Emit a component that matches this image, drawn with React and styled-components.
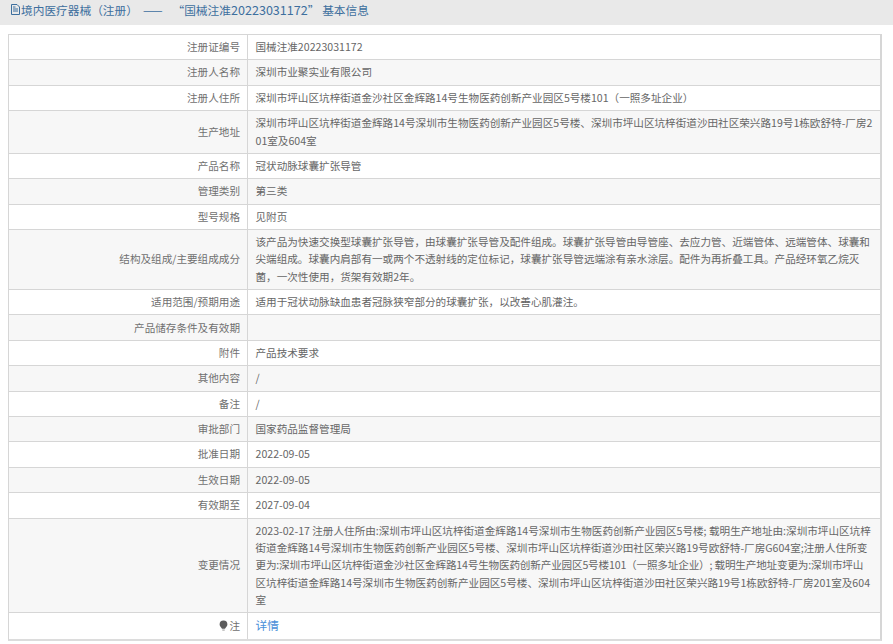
import React from 'react';
import styled, { createGlobalStyle } from 'styled-components';

const GlobalStyle = createGlobalStyle`
    html, body {
        margin: 0;
        padding: 0;
        background: #fff;
    }
    body {
        font-family: "Noto Sans CJK SC", "Liberation Sans", sans-serif;
        font-size: 10.6px;
        color: #666;
    }
`;

const Header = styled.div`
    display: flex;
    align-items: center;
    height: 18.5px;
    padding: 0 0 6px 10px;
    background: #e9e9e9;
    color: #3d6f9e;
    font-size: 11.7px;
    white-space: pre;
`;

const DocIcon = styled.svg`
    width: 11px;
    height: 13px;
    flex: none;
`;

const HeaderDash = styled.span`
    margin: 0 8px 0 5px;
    letter-spacing: 2px;
`;

const HeaderNumber = styled.span`
    font-size: 12.6px;
`;

const Table = styled.div`
    margin: 9.5px 11px 0 8px;
    border-top: 1px solid #d6d6d6;
    border-left: 1px solid #d6d6d6;
    border-right: 2px solid #d6d6d6;
    border-bottom: 2px solid #dcdcdc;
`;

const Row = styled.div`
    display: flex;
    background: ${props => (props.$shaded ? '#f7f7f7' : '#fff')};
    border-top: ${props => (props.$first ? 'none' : '1px solid #d6d6d6')};
`;

const Label = styled.div`
    display: flex;
    align-items: center;
    justify-content: flex-end;
    flex: none;
    width: 231px;
    padding: 3.1px 7px 4px 0;
    line-height: 17.3px;
    border-right: 1px solid #d6d6d6;
    color: #707070;
`;

const Value = styled.div`
    flex: 1;
    min-width: 0;
    padding: 3.1px 6px 4px 7.5px;
    line-height: 17.3px;
    word-break: break-all;
`;

const Line = styled.div`
    white-space: nowrap;
    letter-spacing: ${props => (props.$tight ? '-0.17px' : 'normal')};
`;

const DetailLink = styled.a`
    color: #4a90d9;
    font-size: 11.7px;
    text-decoration: none;
`;

const BulbIcon = styled.svg`
    width: 9px;
    height: 11px;
    margin-right: 1px;
`;

const rows = [
    ['注册证编号', '国械注准20223031172'],
    ['注册人名称', '深圳市业聚实业有限公司'],
    ['注册人住所', '深圳市坪山区坑梓街道金沙社区金辉路14号生物医药创新产业园区5号楼101（一照多址企业）'],
    ['生产地址', '深圳市坪山区坑梓街道金辉路14号深圳市生物医药创新产业园区5号楼、深圳市坪山区坑梓街道沙田社区荣兴路19号1栋欧舒特-厂房201室及604室'],
    ['产品名称', '冠状动脉球囊扩张导管'],
    ['管理类别', '第三类'],
    ['型号规格', '见附页'],
    ['结构及组成/主要组成成分', '该产品为快速交换型球囊扩张导管，由球囊扩张导管及配件组成。球囊扩张导管由导管座、去应力管、近端管体、远端管体、球囊和尖端组成。球囊内肩部有一或两个不透射线的定位标记，球囊扩张导管远端涂有亲水涂层。配件为再折叠工具。产品经环氧乙烷灭菌，一次性使用，货架有效期2年。'],
    ['适用范围/预期用途', '适用于冠状动脉缺血患者冠脉狭窄部分的球囊扩张，以改善心肌灌注。'],
    ['产品储存条件及有效期', ''],
    ['附件', '产品技术要求'],
    ['其他内容', '/'],
    ['备注', '/'],
    ['审批部门', '国家药品监督管理局'],
    ['批准日期', '2022-09-05'],
    ['生效日期', '2022-09-05'],
    ['有效期至', '2027-09-04'],
];

const changeLines = [
    '2023-02-17 注册人住所由:深圳市坪山区坑梓街道金辉路14号深圳市生物医药创新产业园区5号楼; 载明生产地址由:深圳市坪山区坑梓',
    '街道金辉路14号深圳市生物医药创新产业园区5号楼、深圳市坪山区坑梓街道沙田社区荣兴路19号欧舒特-厂房G604室;注册人住所变',
    '更为:深圳市坪山区坑梓街道金沙社区金辉路14号生物医药创新产业园区5号楼101（一照多址企业）; 载明生产地址变更为:深圳市坪山',
    '区坑梓街道金辉路14号深圳市生物医药创新产业园区5号楼、深圳市坪山区坑梓街道沙田社区荣兴路19号1栋欧舒特-厂房201室及604',
    '室',
];

const App = () => (
    <>
        <GlobalStyle />
        <Header>
            <DocIcon viewBox="0 0 11 13" fill="none" stroke="#3d6f9e" strokeWidth="1">
                <path d="M1.5 1.5h5.5l2.5 2.5v7.5h-8z" />
                <path d="M3 6h5M3 8h5M3 4h2.5" />
            </DocIcon>
            境内医疗器械（注册）
            <HeaderDash>——</HeaderDash>
            “国械注准<HeaderNumber>20223031172</HeaderNumber>” 基本信息
        </Header>
        <Table>
            {rows.map(([label, value], i) => (
                <Row key={label} $first={i === 0} $shaded={i % 2 === 1}>
                    <Label>{label}</Label>
                    <Value>{value}</Value>
                </Row>
            ))}
            <Row $shaded>
                <Label>变更情况</Label>
                <Value>
                    {changeLines.map((line, i) => (
                        <Line key={i} $tight={i === 2}>{line}</Line>
                    ))}
                </Value>
            </Row>
            <Row>
                <Label>
                    <BulbIcon viewBox="0 0 9 11">
                        <path d="M4.5 0.5a3.9 3.9 0 0 1 3.9 3.9c0 2-1.7 2.8-2.4 4.4h-3c-.7-1.6-2.4-2.4-2.4-4.4a3.9 3.9 0 0 1 3.9-3.9z" fill="#5c5c5c" />
                        <path d="M3.3 9.6h2.4v.9h-2.4z" fill="#8a8a8a" />
                    </BulbIcon>
                    注
                </Label>
                <Value>
                    <DetailLink href="#">详情</DetailLink>
                </Value>
            </Row>
        </Table>
    </>
);

export default App;
